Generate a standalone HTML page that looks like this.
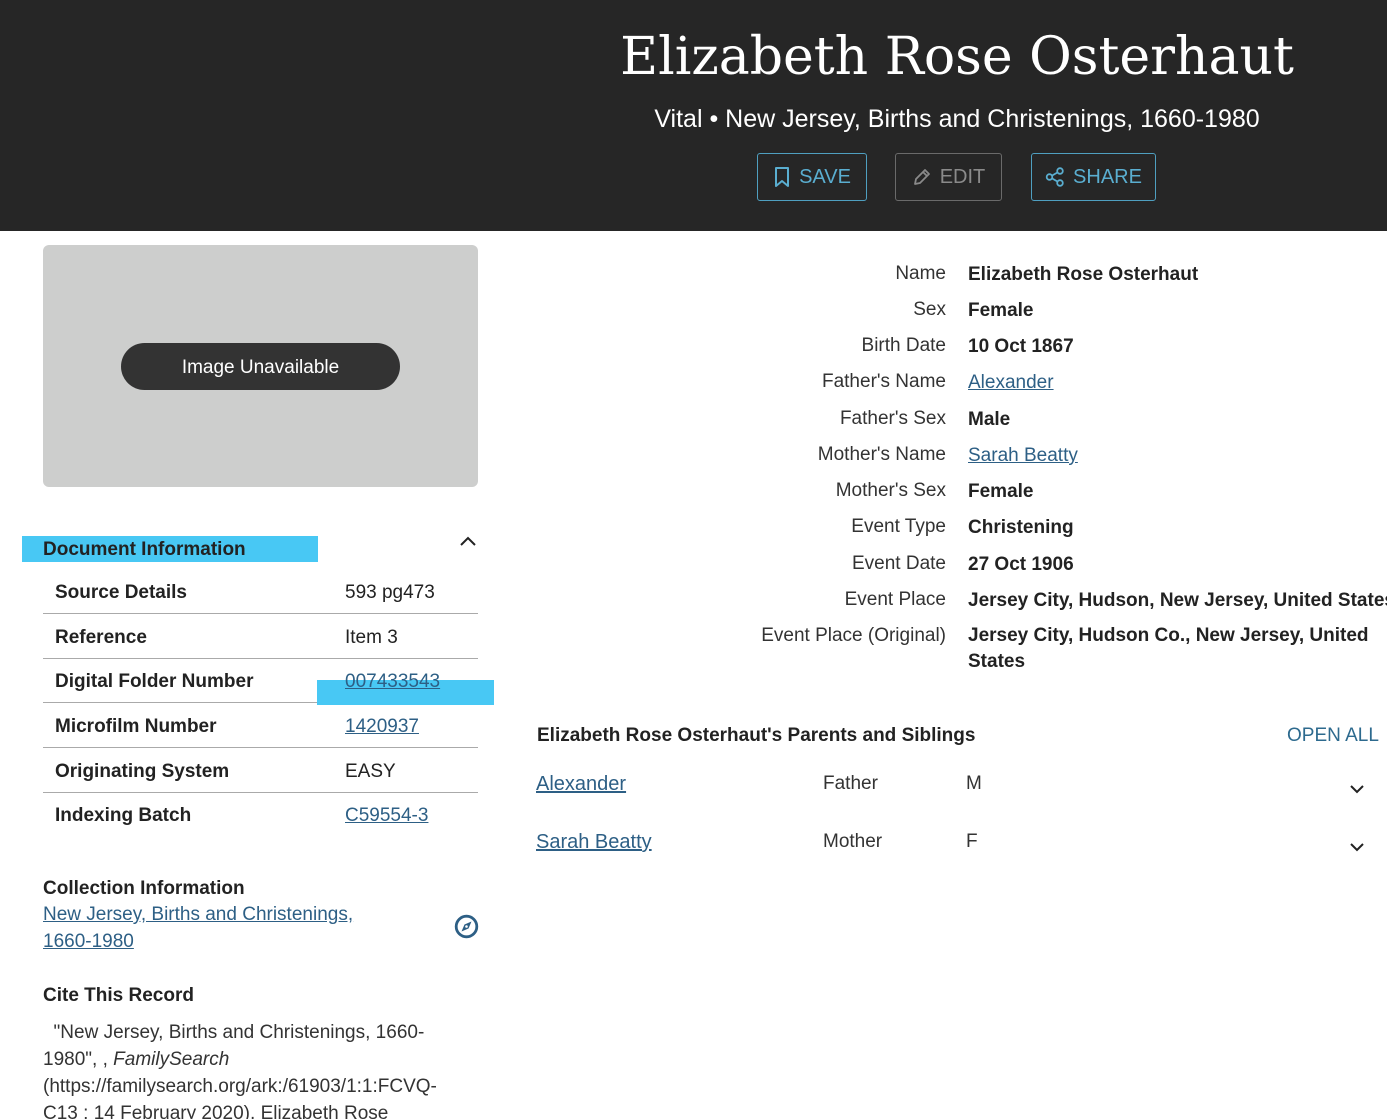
<!DOCTYPE html>
<html><head><meta charset="utf-8">
<style>
*{margin:0;padding:0;box-sizing:border-box}
html,body{width:1387px;height:1119px;overflow:hidden;background:#fff}
body{position:relative;font-family:"Liberation Sans",sans-serif;color:#222}
.a{position:absolute;white-space:nowrap;line-height:26px;margin-top:2px}
#hdr{position:absolute;left:0;top:0;width:1387px;height:231px;background:#262626}
.title{position:absolute;left:557px;width:800px;top:22px;text-align:center;color:#fff;font-family:"DejaVu Serif","Liberation Serif",serif;font-size:52px;line-height:70px}
.sub{position:absolute;left:600px;width:714px;top:103px;text-align:center;color:#fff;font-size:25px;line-height:32px}
.btn{position:absolute;top:153px;height:48px;border:1px solid #4f9fc0;border-radius:3px;color:#5aaed0;font-size:20px;display:flex;align-items:center;justify-content:center;gap:8px}
.btn.ed{border-color:#6a6a6a;color:#8a8a8a}
.lab{position:absolute;right:441px;font-size:19px;color:#333;white-space:nowrap;line-height:26px;margin-top:2px}
.val{position:absolute;left:968px;font-size:19px;font-weight:bold;color:#222;white-space:nowrap;line-height:26px;margin-top:2px}
a{color:#2d5f85;text-decoration:underline}
.row{position:absolute;left:43px;width:435px;height:45px;border-bottom:1px solid #aaa}
.row .k{position:absolute;left:12px;top:11px;font-size:19px;font-weight:bold;line-height:26px}
.row .v{position:absolute;left:302px;top:11px;font-size:19px;line-height:26px;z-index:2}
</style></head><body>
<div id="hdr">
<div class="title">Elizabeth Rose Osterhaut</div>
<div class="sub">Vital • New Jersey, Births and Christenings, 1660-1980</div>
<div class="btn" style="left:757px;width:110px"><svg width="18" height="22" viewBox="0 0 18 22"><path d="M3 2h12v18l-6-5-6 5z" fill="none" stroke="#5aaed0" stroke-width="2" stroke-linejoin="round"/></svg>SAVE</div>
<div class="btn ed" style="left:895px;width:107px"><svg width="20" height="20" viewBox="0 0 20 20"><path d="M3 17l1-5L13 3l4 4-9 9zM11 5l4 4" fill="none" stroke="#8a8a8a" stroke-width="1.8" stroke-linejoin="round"/></svg>EDIT</div>
<div class="btn" style="left:1031px;width:125px"><svg width="20" height="20" viewBox="0 0 20 20"><circle cx="4.5" cy="10" r="2.8" fill="none" stroke="#5aaed0" stroke-width="1.8"/><circle cx="15" cy="4" r="2.8" fill="none" stroke="#5aaed0" stroke-width="1.8"/><circle cx="15" cy="16" r="2.8" fill="none" stroke="#5aaed0" stroke-width="1.8"/><path d="M7 8.6l5.6-3.2M7 11.4l5.6 3.2" stroke="#5aaed0" stroke-width="1.8"/></svg>SHARE</div>
</div>

<div style="position:absolute;left:43px;top:245px;width:435px;height:242px;background:#cdcecd;border-radius:6px"></div>
<div style="position:absolute;left:121px;top:343px;width:279px;height:47px;background:#333;border-radius:24px;color:#fff;font-size:19px;display:flex;align-items:center;justify-content:center;padding-top:2px">Image Unavailable</div>

<div style="position:absolute;left:22px;top:536px;width:296px;height:26px;background:#48c8f4"></div>
<div class="a" style="left:43px;top:535px;font-size:19px;font-weight:bold;color:#222">Document Information</div>
<svg style="position:absolute;left:459px;top:535px" width="18" height="12" viewBox="0 0 18 12"><path d="M2 10l7-7 7 7" fill="none" stroke="#222" stroke-width="2"/></svg>

<div style="position:absolute;left:317px;top:680px;width:177px;height:25px;background:#48c8f4;z-index:1"></div>
<div class="row" style="top:569px"><span class="k">Source Details</span><span class="v">593 pg473</span></div>
<div class="row" style="top:614px"><span class="k">Reference</span><span class="v">Item 3</span></div>
<div class="row" style="top:658px"><span class="k">Digital Folder Number</span><span class="v"><a>007433543</a></span></div>
<div class="row" style="top:703px"><span class="k">Microfilm Number</span><span class="v"><a>1420937</a></span></div>
<div class="row" style="top:748px"><span class="k">Originating System</span><span class="v">EASY</span></div>
<div class="row" style="top:792px;border:none"><span class="k">Indexing Batch</span><span class="v"><a>C59554-3</a></span></div>

<div class="a" style="left:43px;top:874px;font-size:19px;font-weight:bold">Collection Information</div>
<div class="a" style="left:43px;top:900px;font-size:19px"><a>New Jersey, Births and Christenings,</a></div>
<div class="a" style="left:43px;top:927px;font-size:19px"><a>1660-1980</a></div>
<svg style="position:absolute;left:454px;top:914px" width="25" height="25" viewBox="0 0 25 25"><circle cx="12.5" cy="12.5" r="10.3" fill="none" stroke="#2d5f85" stroke-width="2.8"/><path d="M17.5 7.5l-3 7-7 3 3-7z" fill="#2d5f85"/><circle cx="12.5" cy="12.5" r="1.3" fill="#fff"/></svg>

<div class="a" style="left:43px;top:981px;font-size:19px;font-weight:bold">Cite This Record</div>
<div class="a" style="left:43px;top:1018px;font-size:19px;color:#333">&nbsp;&nbsp;"New Jersey, Births and Christenings, 1660-</div>
<div class="a" style="left:43px;top:1045px;font-size:19px;color:#333">1980", , <i>FamilySearch</i></div>
<div class="a" style="left:43px;top:1072px;font-size:19px;color:#333">(https://familysearch.org/ark:/61903/1:1:FCVQ-</div>
<div class="a" style="left:43px;top:1099px;font-size:19px;color:#333">C13 : 14 February 2020), Elizabeth Rose</div>

<div class="lab" style="top:259px">Name</div><div class="val" style="top:260px">Elizabeth Rose Osterhaut</div>
<div class="lab" style="top:295px">Sex</div><div class="val" style="top:296px">Female</div>
<div class="lab" style="top:331px">Birth Date</div><div class="val" style="top:332px">10 Oct 1867</div>
<div class="lab" style="top:367px">Father's Name</div><div class="val" style="top:368px;font-weight:normal"><a>Alexander</a></div>
<div class="lab" style="top:404px">Father's Sex</div><div class="val" style="top:405px">Male</div>
<div class="lab" style="top:440px">Mother's Name</div><div class="val" style="top:441px;font-weight:normal"><a>Sarah Beatty</a></div>
<div class="lab" style="top:476px">Mother's Sex</div><div class="val" style="top:477px">Female</div>
<div class="lab" style="top:512px">Event Type</div><div class="val" style="top:513px">Christening</div>
<div class="lab" style="top:549px">Event Date</div><div class="val" style="top:550px">27 Oct 1906</div>
<div class="lab" style="top:585px">Event Place</div><div class="val" style="top:586px">Jersey City, Hudson, New Jersey, United States</div>
<div class="lab" style="top:621px">Event Place (Original)</div><div class="val" style="top:621px">Jersey City, Hudson Co., New Jersey, United</div>
<div class="val" style="top:647px">States</div>

<div class="a" style="left:537px;top:721px;font-size:19px;font-weight:bold">Elizabeth Rose Osterhaut's Parents and Siblings</div>
<div class="a" style="left:1287px;top:721px;font-size:19px;color:#2d6a8e">OPEN ALL</div>
<div class="a" style="left:536px;top:769px;font-size:20px"><a>Alexander</a></div>
<div class="a" style="left:823px;top:769px;font-size:19px;color:#333">Father</div>
<div class="a" style="left:966px;top:769px;font-size:19px;color:#333">M</div>
<svg style="position:absolute;left:1349px;top:783px" width="16" height="12" viewBox="0 0 16 12"><path d="M2 3l6 6 6-6" fill="none" stroke="#222" stroke-width="2"/></svg>
<div class="a" style="left:536px;top:827px;font-size:20px"><a>Sarah Beatty</a></div>
<div class="a" style="left:823px;top:827px;font-size:19px;color:#333">Mother</div>
<div class="a" style="left:966px;top:827px;font-size:19px;color:#333">F</div>
<svg style="position:absolute;left:1349px;top:841px" width="16" height="12" viewBox="0 0 16 12"><path d="M2 3l6 6 6-6" fill="none" stroke="#222" stroke-width="2"/></svg>
</body></html>
